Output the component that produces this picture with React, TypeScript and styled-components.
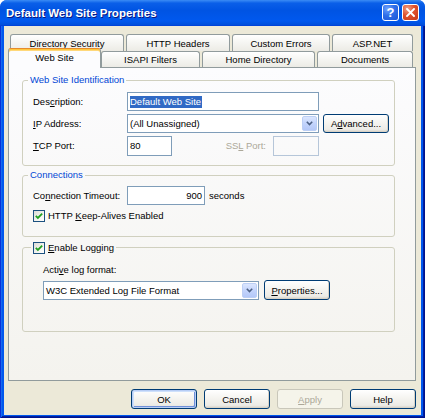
import React from "react";
import styled, { createGlobalStyle, css } from "styled-components";

const GlobalStyle = createGlobalStyle`
  html, body { margin: 0; padding: 0; background: #ffffff; }
  body { font-family: "Liberation Sans", Arial, sans-serif; }
`;

const Window = styled.div`
  width: 425px;
  height: 418px;
  display: flex;
  flex-direction: column;
  background: #0055ea;
  border-radius: 7px 7px 0 0;
  overflow: hidden;
  font-family: "Liberation Sans", Arial, sans-serif;
  font-size: 9.5px;
  color: #000;
`;

const TitleBar = styled.div`
  height: 26px;
  flex: none;
  display: flex;
  align-items: flex-start;
  padding: 0 6px 0 6px;
  box-sizing: border-box;
  background: linear-gradient(
    180deg,
    #3b8cf5 0%,
    #0a5fe8 12%,
    #0054e3 40%,
    #0058ee 80%,
    #0050dd 94%,
    #003dd7 100%
  );
`;

const Title = styled.div`
  flex: 1;
  color: #ffffff;
  font-weight: bold;
  font-size: 11.5px;
  line-height: 26px;
  text-shadow: 1px 1px 0 #0a1883;
  white-space: nowrap;
`;

const CaptionButtons = styled.div`
  display: flex;
  gap: 3px;
  margin-top: 4px;
`;

const CaptionButton = styled.div<{ $kind: "help" | "close" }>`
  width: 17px;
  height: 17px;
  box-sizing: border-box;
  border: 1px solid #ffffff;
  border-radius: 3px;
  display: flex;
  align-items: center;
  justify-content: center;
  color: #ffffff;
  font-weight: bold;
  font-size: 13px;
  line-height: 1;
  ${(p) =>
    p.$kind === "help"
      ? css`
          background: radial-gradient(circle at 30% 25%, #6fa3ff 0%, #2f6ee8 45%, #1c55d6 100%);
        `
      : css`
          background: radial-gradient(circle at 30% 25%, #f0a088 0%, #e0512c 45%, #c3381a 100%);
        `}
`;

const Frame = styled.div`
  flex: 1;
  min-height: 0;
  display: flex;
  flex-direction: column;
  padding: 0 4px 3px 4px;
  background: #0058ee;
  box-shadow: inset 1px 0 #0831d9, inset -1px 0 #00138c, inset 0 -1px #00138c,
    inset 2px 0 #166aee, inset -2px 0 #001ea0, inset 0 -2px #001ea0;
`;

const Client = styled.div`
  flex: 1;
  min-height: 0;
  background: #ece9d8;
  display: flex;
  flex-direction: column;
  padding: 8px 5px 6px 4px;
`;

const TabRow = styled.div<{ $indent: number; $h: number }>`
  display: flex;
  align-items: flex-end;
  gap: 2px;
  height: ${(p) => p.$h}px;
  padding-left: ${(p) => p.$indent}px;
  flex: none;
`;

const Tab = styled.div<{ $w: number; $h: number; $active?: boolean }>`
  width: ${(p) => p.$w}px;
  height: ${(p) => p.$h}px;
  flex: none;
  box-sizing: border-box;
  border: 1px solid #919b9c;
  border-bottom: 0;
  border-radius: 3px 3px 0 0;
  display: flex;
  align-items: center;
  justify-content: center;
  white-space: nowrap;
  background: linear-gradient(180deg, #ffffff 0%, #f7f7f4 40%, #ecebe5 100%);
  ${(p) =>
    p.$active &&
    css`
      position: relative;
      z-index: 1;
      margin-right: -2px;
      margin-bottom: -1px;
      padding-bottom: 2px;
      background: #fcfcfe;
      border-top-color: #e68b2c;
      box-shadow: inset 0 1px 0 #ffc73c, inset 0 2px 0 #ffd87a;
    `}
`;

const Panel = styled.div`
  flex: 1;
  min-height: 0;
  box-sizing: border-box;
  border: 1px solid #919b9c;
  background: linear-gradient(180deg, #fcfcfe 0%, #f4f3ee 100%);
  padding: 6px 20px 0 13px;
  display: flex;
  flex-direction: column;
  gap: 3px;
`;

const Group = styled.fieldset`
  margin: 0;
  padding: 0;
  min-width: 0;
  border: 1px solid #d0d0bf;
  border-radius: 3px;
`;

const Legend = styled.legend<{ $inset: number; $h: number; $plain?: boolean }>`
  margin-left: ${(p) => p.$inset}px;
  padding: 0 2px;
  height: ${(p) => p.$h}px;
  line-height: ${(p) => p.$h}px;
  color: ${(p) => (p.$plain ? "#000000" : "#0046d5")};
`;

const LegendCheck = styled.span`
  display: flex;
  align-items: center;
  gap: 3px;
  height: 100%;
`;

const IdentGrid = styled.div`
  display: grid;
  grid-template-columns: 94px 192px 1fr;
  grid-auto-rows: 19px;
  row-gap: 3px;
  align-items: center;
  padding: 6px 0 10px 10px;
`;

const PortRow = styled.div`
  display: flex;
  align-items: center;
  height: 19px;
`;

const ConnBody = styled.div`
  display: flex;
  flex-direction: column;
  padding: 5px 0 11px 10px;
`;

const FieldRow = styled.div`
  display: flex;
  align-items: center;
  height: 19px;
`;

const CheckRow = styled.div`
  display: flex;
  align-items: center;
  gap: 3px;
  height: 18px;
  margin-top: 2px;
`;

const LogBody = styled.div`
  display: flex;
  flex-direction: column;
  padding: 9px 0 31px 20px;
`;

const LogRow = styled.div`
  display: flex;
  align-items: center;
  gap: 5px;
  height: 20px;
  margin-top: 4px;
`;

const Label = styled.span<{ $w?: number; $disabled?: boolean; $gap?: number }>`
  white-space: nowrap;
  line-height: 12px;
  color: ${(p) => (p.$disabled ? "#aca899" : "#000000")};
  ${(p) => p.$w && css`width: ${p.$w}px; flex: none;`}
  ${(p) => p.$gap !== undefined && css`margin-left: ${p.$gap}px;`}
`;

const AutoLabel = styled(Label)`
  margin-left: auto;
  margin-right: 7px;
`;

const Key = styled.span`
  text-decoration: underline;
  text-underline-offset: 1px;
`;

const TextBox = styled.div<{ $w: number; $h?: number; $right?: boolean; $disabled?: boolean }>`
  width: ${(p) => p.$w}px;
  height: ${(p) => p.$h ?? 19}px;
  flex: none;
  box-sizing: border-box;
  border: 1px solid ${(p) => (p.$disabled ? "#b6c6d9" : "#7f9db9")};
  background: ${(p) => (p.$disabled ? "transparent" : "#ffffff")};
  display: flex;
  align-items: center;
  justify-content: ${(p) => (p.$right ? "flex-end" : "flex-start")};
  padding: 0 2px 0 2px;
  white-space: nowrap;
`;

const Selected = styled.span`
  background: #316ac5;
  color: #ffffff;
  line-height: 12px;
  padding: 0 1px 0 0;
`;

const Combo = styled.div<{ $w: number }>`
  width: ${(p) => p.$w}px;
  height: 19px;
  flex: none;
  box-sizing: border-box;
  border: 1px solid #7f9db9;
  background: #ffffff;
  display: flex;
  align-items: stretch;
  padding: 1px;
`;

const ComboText = styled.span`
  flex: 1;
  display: flex;
  align-items: center;
  padding-left: 1px;
  white-space: nowrap;
`;

const DropButton = styled.span`
  width: 15px;
  flex: none;
  box-sizing: border-box;
  border: 1px solid #bccff5;
  border-radius: 2px;
  background: linear-gradient(180deg, #dbe6fe 0%, #c3d4fc 50%, #b4c8f8 100%);
  display: flex;
  align-items: center;
  justify-content: center;
`;

const Check = styled.span`
  width: 12px;
  height: 12px;
  flex: none;
  box-sizing: border-box;
  border: 1px solid #1c5180;
  background: linear-gradient(135deg, #dcdcd7 0%, #f4f4f0 60%, #ffffff 100%);
  display: flex;
  align-items: center;
  justify-content: center;
`;

const Button = styled.button<{ $w: number; $h?: number; $default?: boolean }>`
  width: ${(p) => p.$w}px;
  height: ${(p) => p.$h ?? 20}px;
  flex: none;
  box-sizing: border-box;
  margin: 0;
  padding: 0;
  font-family: inherit;
  font-size: inherit;
  color: #000000;
  border: 1px solid #003c74;
  border-radius: 3px;
  background: linear-gradient(180deg, #ffffff 0%, #f5f4f0 45%, #ecebe6 85%, #d6d0c5 100%);
  box-shadow: inset -1px -1px 0 #d8d2c6;
  ${(p) =>
    p.$default &&
    css`
      box-shadow: inset 0 0 0 1px #b7cdf5, inset 1px 1px 0 1px #cee0fb,
        inset -1px -1px 0 1px #6f8fd8;
    `}
  &:disabled {
    border-color: #c9c7ba;
    background: #f5f4ea;
    color: #aca899;
    box-shadow: none;
  }
`;

const ButtonBar = styled.div`
  display: flex;
  justify-content: flex-end;
  gap: 7px;
  margin-top: 8px;
  flex: none;
`;

const Chevron = () => (
  <svg width="7" height="5" viewBox="0 0 7 5">
    <polyline points="0.8,0.8 3.5,3.5 6.2,0.8" fill="none" stroke="#4d6185" strokeWidth="1.6" />
  </svg>
);

const CheckMark = () => (
  <svg width="8" height="8" viewBox="0 0 8 8">
    <polyline points="0.8,3.8 2.9,5.9 7.2,1.6" fill="none" stroke="#21a121" strokeWidth="1.8" />
  </svg>
);

const CloseGlyph = () => (
  <svg width="9" height="9" viewBox="0 0 9 9">
    <path d="M1 1 L8 8 M8 1 L1 8" stroke="#ffffff" strokeWidth="1.9" strokeLinecap="square" />
  </svg>
);

export default function App() {
  return (
    <>
      <GlobalStyle />
      <Window>
        <TitleBar>
          <Title>Default Web Site Properties</Title>
          <CaptionButtons>
            <CaptionButton $kind="help">?</CaptionButton>
            <CaptionButton $kind="close">
              <CloseGlyph />
            </CaptionButton>
          </CaptionButtons>
        </TitleBar>
        <Frame>
          <Client>
            <TabRow $indent={2} $h={17}>
              <Tab $w={114} $h={17}>Directory Security</Tab>
              <Tab $w={104} $h={17}>HTTP Headers</Tab>
              <Tab $w={98} $h={17}>Custom Errors</Tab>
              <Tab $w={81} $h={17}>ASP.NET</Tab>
            </TabRow>
            <TabRow $indent={0} $h={16}>
              <Tab $w={93} $h={20} $active>Web Site</Tab>
              <Tab $w={99} $h={16}>ISAPI Filters</Tab>
              <Tab $w={113} $h={16}>Home Directory</Tab>
              <Tab $w={96} $h={16}>Documents</Tab>
            </TabRow>
            <Panel>
              <Group>
                <Legend $inset={5} $h={12}>Web Site Identification</Legend>
                <IdentGrid>
                  <Label>
                    Des<Key>c</Key>ription:
                  </Label>
                  <TextBox $w={192}>
                    <Selected>Default Web Site</Selected>
                  </TextBox>
                  <span />
                  <Label>
                    <Key>I</Key>P Address:
                  </Label>
                  <Combo $w={192}>
                    <ComboText>(All Unassigned)</ComboText>
                    <DropButton>
                      <Chevron />
                    </DropButton>
                  </Combo>
                  <Button $w={66} $h={19} style={{ marginLeft: 4 }}>
                    A<Key>d</Key>vanced...
                  </Button>
                  <Label>
                    <Key>T</Key>CP Port:
                  </Label>
                  <PortRow>
                    <TextBox $w={45} $h={20}>80</TextBox>
                    <AutoLabel $disabled>
                      SS<Key>L</Key> Port:
                    </AutoLabel>
                    <TextBox $w={46} $h={20} $disabled />
                  </PortRow>
                </IdentGrid>
              </Group>
              <Group>
                <Legend $inset={5} $h={12}>Connections</Legend>
                <ConnBody>
                  <FieldRow>
                    <Label $w={94}>
                      Co<Key>n</Key>nection Timeout:
                    </Label>
                    <TextBox $w={78} $right>900</TextBox>
                    <Label $gap={4}>seconds</Label>
                  </FieldRow>
                  <CheckRow>
                    <Check>
                      <CheckMark />
                    </Check>
                    <Label>
                      HTTP <Key>K</Key>eep-Alives Enabled
                    </Label>
                  </CheckRow>
                </ConnBody>
              </Group>
              <Group>
                <Legend $inset={8} $h={15} $plain>
                  <LegendCheck>
                    <Check>
                      <CheckMark />
                    </Check>
                    <Label>
                      <Key>E</Key>nable Logging
                    </Label>
                  </LegendCheck>
                </Legend>
                <LogBody>
                  <Label>
                    Acti<Key>v</Key>e log format:
                  </Label>
                  <LogRow>
                    <Combo $w={216}>
                      <ComboText>W3C Extended Log File Format</ComboText>
                      <DropButton>
                        <Chevron />
                      </DropButton>
                    </Combo>
                    <Button $w={66}>
                      <Key>P</Key>roperties...
                    </Button>
                  </LogRow>
                </LogBody>
              </Group>
            </Panel>
            <ButtonBar>
              <Button $w={66} $default>OK</Button>
              <Button $w={66}>Cancel</Button>
              <Button $w={66} disabled>
                <Key>A</Key>pply
              </Button>
              <Button $w={66}>Help</Button>
            </ButtonBar>
          </Client>
        </Frame>
      </Window>
    </>
  );
}
